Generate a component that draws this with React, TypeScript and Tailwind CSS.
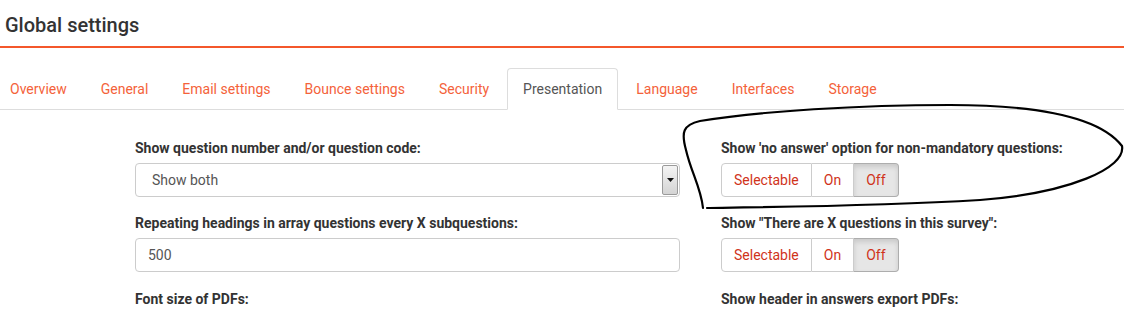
const tabs = [
  "Overview",
  "General",
  "Email settings",
  "Bounce settings",
  "Security",
  "Presentation",
  "Language",
  "Interfaces",
  "Storage",
];

function Label({ children }: { children: React.ReactNode }) {
  return (
    <div className="text-[14px] leading-[18px] font-bold text-[#333] mb-[6px]">
      {children}
    </div>
  );
}

function Toggle() {
  return (
    <div className="inline-flex h-[34px] text-[14px] text-[#d0331b]">
      <div className="px-[12px] flex items-center border border-[#ccc] rounded-l-[4px] bg-white">Selectable</div>
      <div className="px-[12px] flex items-center border border-l-0 border-[#ccc] bg-white">On</div>
      <div className="px-[12px] flex items-center border border-l-0 border-[#adadad] rounded-r-[4px] bg-[#e6e6e6] shadow-[inset_0_3px_5px_rgba(0,0,0,0.125)]">
        Off
      </div>
    </div>
  );
}

export default function App() {
  return (
    <div className="relative w-[1124px] h-[309px] overflow-hidden bg-white font-['Roboto',sans-serif]">
      <div className="h-[46px] pl-[5px] pt-[13px]">
        <h1 className="text-[20px] leading-[24px] font-medium text-[#333]">Global settings</h1>
      </div>
      <div className="h-[2px] bg-[#f4572b]" />

      <div className="mt-[20px] flex border-b border-[#ddd] ml-[-6px]">
        {tabs.map((t) => {
          const active = t === "Presentation";
          return (
            <div
              key={t}
              className={
                active
                  ? "-mb-px mr-[2px] px-[15px] py-[10px] text-[14px] leading-[20px] border border-[#ddd] border-b-white bg-white rounded-t-[4px] text-[#555]"
                  : "-mb-px mr-[2px] px-[15px] py-[10px] text-[14px] leading-[20px] border border-transparent text-[#f4623a]"
              }
            >
              {t}
            </div>
          );
        })}
      </div>

      <div className="pl-[135px] pt-[29px] grid grid-cols-[545px_1fr] gap-x-[41px]">
        <div className="mb-[17px]">
          <Label>Show question number and/or question code:</Label>
          <div className="relative h-[34px] border border-[#ccc] rounded-[4px] flex items-center pl-[16px] text-[14px] text-[#555]">
            Show both
            <div className="absolute right-[1px] top-[1px] bottom-[1px] w-[16px] border border-[#9a9a9a] rounded-[2px] bg-gradient-to-b from-[#f4f4f4] to-[#d4d4d4] flex items-center justify-center">
              <svg width="7" height="4" viewBox="0 0 7 4">
                <path d="M0 0 L7 0 L3.5 4 Z" fill="#111" />
              </svg>
            </div>
          </div>
        </div>
        <div className="mb-[17px]">
          <Label>Show 'no answer' option for non-mandatory questions:</Label>
          <Toggle />
        </div>

        <div className="mb-[18px]">
          <Label>Repeating headings in array questions every X subquestions:</Label>
          <div className="h-[34px] border border-[#ccc] rounded-[4px] flex items-center pl-[12px] text-[14px] text-[#555]">
            500
          </div>
        </div>
        <div className="mb-[18px]">
          <Label>Show "There are X questions in this survey":</Label>
          <Toggle />
        </div>

        <div>
          <Label>Font size of PDFs:</Label>
        </div>
        <div>
          <Label>Show header in answers export PDFs:</Label>
        </div>
      </div>

      <svg className="absolute left-0 top-0 pointer-events-none" width="1124" height="309" viewBox="0 0 1124 309">
        <path
          d="M703 208 C701 188, 691 172, 686 150 C681 132, 683 125, 700 121 C760 111, 860 105, 950 105 C1040 105, 1100 117, 1122 146 C1126 168, 1070 193, 980 200 C880 206, 780 207, 707 208"
          fill="none"
          stroke="#000"
          strokeWidth="2.2"
          strokeLinecap="round"
        />
      </svg>
    </div>
  );
}
